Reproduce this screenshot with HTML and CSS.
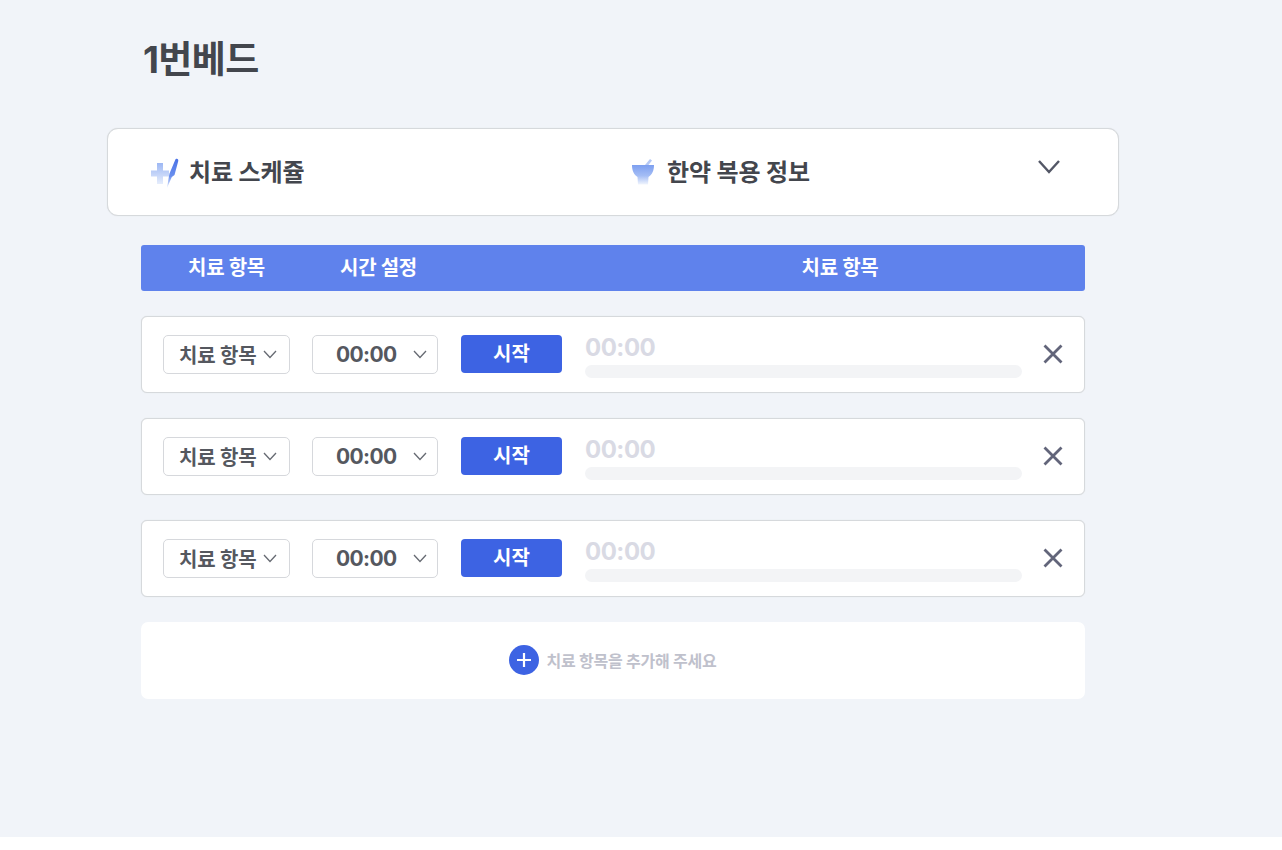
FILE: index.html
```html
<!DOCTYPE html>
<html lang="ko">
<head>
<meta charset="utf-8">
<title>1번베드</title>
<link rel="stylesheet" href="styles.css">
</head>
<body>
<main class="page">
  <h1 class="title">1번베드</h1>
  <section class="info-card">
    <div class="info-item info-schedule">
      <svg class="info-icon" width="30" height="34" viewBox="0 0 30 34">
        <defs>
          <linearGradient id="plus" x1="0" y1="0" x2="0" y2="1"><stop offset="0" stop-color="#9db8f4"/><stop offset="1" stop-color="#e6edfc"/></linearGradient>
          <linearGradient id="needle" x1="0" y1="0" x2="0" y2="1"><stop offset="0" stop-color="#4a72e6"/><stop offset=".6" stop-color="#6b90ee"/><stop offset="1" stop-color="#e8eefc"/></linearGradient>
        </defs>
        <path d="M7 7h6v7.500h6v6h-6V28H7v-7.500H1v-6h6z" fill="url(#plus)"/>
        <path d="M25.500 3.200c1.800-1 3.200 0 2.700 2L24.500 19l-2.700 2L17 32l2-12 .5-2.500z" fill="url(#needle)"/>
      </svg>
      <span>치료 스케쥴</span>
    </div>
    <div class="info-item info-medicine">
      <svg class="info-icon" width="24" height="30" viewBox="0 0 24 30">
        <defs>
          <linearGradient id="bowl" x1="0" y1="0" x2="0" y2="1"><stop offset="0" stop-color="#7d9ff0"/><stop offset=".55" stop-color="#a4bdf5"/><stop offset="1" stop-color="#f1f5fd"/></linearGradient>
        </defs>
        <path d="M14 7l5-6 2 1.500L17.500 7z" fill="#b4c8f5"/>
        <path d="M1 7h22c0 6-2 9.500-5.500 12L17 26.500H7L6.500 19C3 16.500 1 13 1 7z" fill="url(#bowl)"/>
      </svg>
      <span>한약 복용 정보</span>
    </div>
    <svg class="info-toggle" width="24" height="16" viewBox="0 0 24 16"><path d="M2 2l10 11L22 2" fill="none" stroke="#535766" stroke-width="2.400"/></svg>
  </section>

  <section class="board">
    <div class="board-head">
      <span class="col-item">치료 항목</span>
      <span class="col-time">시간 설정</span>
      <span class="col-progress">치료 항목</span>
    </div>

    <div class="row">
      <div class="select select-item"><span>치료 항목</span><svg width="14" height="9" viewBox="0 0 14 9"><path d="M1 1l6 6.500L13 1" fill="none" stroke="#666a72" stroke-width="1.300"/></svg></div>
      <div class="select select-time"><span>00:00</span><svg width="14" height="9" viewBox="0 0 14 9"><path d="M1 1l6 6.500L13 1" fill="none" stroke="#666a72" stroke-width="1.300"/></svg></div>
      <button class="start">시작</button>
      <div class="progress"><span class="clock">00:00</span><div class="track"></div></div>
      <svg class="remove" width="22" height="22" viewBox="0 0 22 22"><path d="M2.500 2.500l17 17M19.500 2.500l-17 17" stroke="#62657a" stroke-width="2.800"/></svg>
    </div>

    <div class="row">
      <div class="select select-item"><span>치료 항목</span><svg width="14" height="9" viewBox="0 0 14 9"><path d="M1 1l6 6.500L13 1" fill="none" stroke="#666a72" stroke-width="1.300"/></svg></div>
      <div class="select select-time"><span>00:00</span><svg width="14" height="9" viewBox="0 0 14 9"><path d="M1 1l6 6.500L13 1" fill="none" stroke="#666a72" stroke-width="1.300"/></svg></div>
      <button class="start">시작</button>
      <div class="progress"><span class="clock">00:00</span><div class="track"></div></div>
      <svg class="remove" width="22" height="22" viewBox="0 0 22 22"><path d="M2.500 2.500l17 17M19.500 2.500l-17 17" stroke="#62657a" stroke-width="2.800"/></svg>
    </div>

    <div class="row">
      <div class="select select-item"><span>치료 항목</span><svg width="14" height="9" viewBox="0 0 14 9"><path d="M1 1l6 6.500L13 1" fill="none" stroke="#666a72" stroke-width="1.300"/></svg></div>
      <div class="select select-time"><span>00:00</span><svg width="14" height="9" viewBox="0 0 14 9"><path d="M1 1l6 6.500L13 1" fill="none" stroke="#666a72" stroke-width="1.300"/></svg></div>
      <button class="start">시작</button>
      <div class="progress"><span class="clock">00:00</span><div class="track"></div></div>
      <svg class="remove" width="22" height="22" viewBox="0 0 22 22"><path d="M2.500 2.500l17 17M19.500 2.500l-17 17" stroke="#62657a" stroke-width="2.800"/></svg>
    </div>

    <div class="add">
      <svg width="30" height="30" viewBox="0 0 30 30"><circle cx="15" cy="15" r="15" fill="#3d63e3"/><path d="M15 8v14M8 15h14" stroke="#fff" stroke-width="2.200"/></svg>
      <span>치료 항목을 추가해 주세요</span>
    </div>
  </section>
</main>
</body>
</html>
```
FILE: styles.css
```css
* { box-sizing: border-box; }
html, body { margin: 0; padding: 0; background: #fff; }
body { font-family: Inter, "Noto Sans CJK KR", "Noto Sans", sans-serif; }

.page {
  height: 837px;
  background: #f1f4f9;
  padding: 35px 0 0 107px;
}

.title {
  margin: 0 0 39px 36px;
  height: 54px;
  font-size: 37px;
  line-height: 50px;
  font-weight: 700;
  letter-spacing: -.6px;
  color: #43464d;
}

.info-card {
  width: 1012px;
  height: 88px;
  background: #fff;
  border: 1px solid #d6d9dc;
  box-shadow: 0 0 1px #d6d9dc;
  border-radius: 11px;
  display: flex;
  align-items: center;
  padding: 2px 0 0 42px;
}
.info-item {
  display: flex;
  align-items: center;
  font-size: 24px;
  font-weight: 700;
  letter-spacing: -.1px;
  color: #43464d;
  line-height: 34px;
}
.info-schedule { width: 481px; gap: 9px; }
.info-schedule .info-icon { flex: none; }
.info-medicine { width: 406px; gap: 12px; }
.info-toggle { margin-top: -12px; }

.board {
  width: 944px;
  margin: 29px 0 0 34px;
}
.board-head {
  height: 46px;
  background: #5f82ec;
  border-radius: 3px;
  display: flex;
  align-items: center;
  color: #fff;
  font-size: 20px;
  font-weight: 700;
  letter-spacing: -.3px;
  line-height: 28px;
  margin-bottom: 25px;
}
.col-item { width: 171px; text-align: center; }
.col-time { width: 133px; text-align: center; }
.col-progress { flex: 1; margin-left: 150px; text-align: center; }

.row {
  height: 77px;
  background: #fff;
  border: 1px solid #d6d9dc;
  box-shadow: 0 0 1px #d6d9dc;
  border-radius: 6px;
  display: flex;
  align-items: center;
  padding: 0 0 1px 21px;
  margin-bottom: 25px;
}
.select {
  height: 39px;
  background: #fff;
  border: 1px solid #d6d8dc;
  border-radius: 5px;
  display: flex;
  align-items: center;
  color: #55585f;
  font-weight: 700;
  width: 127px;
}
.select-item {
  font-size: 20px;
  letter-spacing: -.2px;
  padding-left: 15px;
  gap: 7px;
  margin-right: 22px;
}
.select-time {
  width: 126px;
  font-size: 21px;
  letter-spacing: -.6px;
  padding-left: 23px;
  gap: 16px;
  margin-right: 23px;
}
.select svg { flex: none; }
.start {
  width: 101px;
  height: 38px;
  border: 0;
  border-radius: 4px;
  background: #3d63e3;
  color: #fff;
  font: 700 20px/28px Inter, "Noto Sans CJK KR", "Noto Sans", sans-serif;
  padding: 0;
  margin-right: 23px;
}
.progress {
  width: 437px;
  display: flex;
  flex-direction: column;
}
.clock {
  font-size: 24px;
  font-weight: 700;
  letter-spacing: -.5px;
  line-height: 32px;
  color: #d9dae4;
  margin-top: 1px;
}
.track {
  height: 13px;
  margin-top: 1px;
  background: #f3f4f6;
  border-radius: 7px;
}
.remove { margin-left: 20px; flex: none; }

.add {
  height: 77px;
  background: #fff;
  border-radius: 7px;
  display: flex;
  align-items: center;
  justify-content: center;
  gap: 7px;
  margin-top: 1px;
  padding-bottom: 1px;
  color: #bfc1cc;
  font-size: 16px;
  font-weight: 700;
  letter-spacing: -.23px;
}
```
